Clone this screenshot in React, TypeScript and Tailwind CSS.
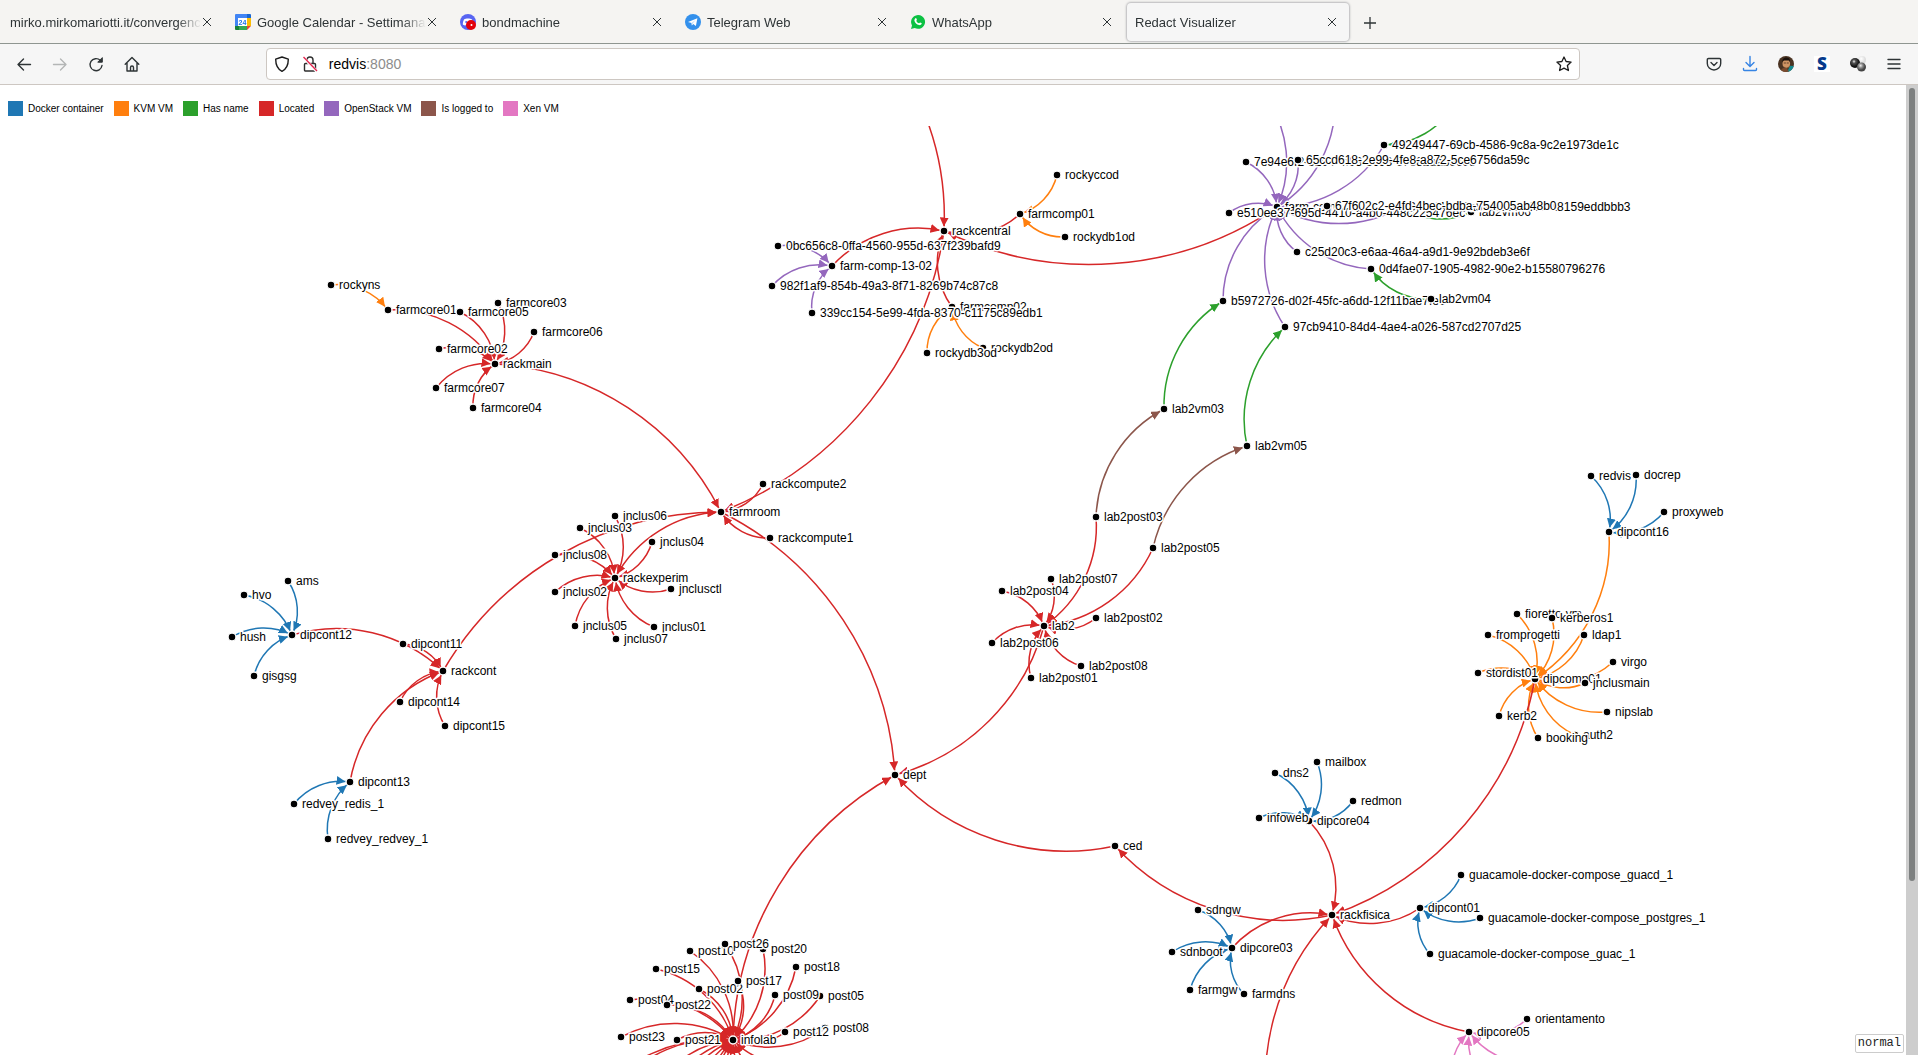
import React from "react";

type Kind = "docker" | "kvm" | "name" | "located" | "openstack" | "logged" | "xen";

const COLORS: Record<Kind, string> = {
  docker: "#1f77b4",
  kvm: "#ff7f0e",
  name: "#2ca02c",
  located: "#d62728",
  openstack: "#9467bd",
  logged: "#8c564b",
  xen: "#e377c2",
};

const LEGEND: { label: string; swatch: string }[] = [
  { label: "Docker container", swatch: "bg-[#1f77b4]" },
  { label: "KVM VM", swatch: "bg-[#ff7f0e]" },
  { label: "Has name", swatch: "bg-[#2ca02c]" },
  { label: "Located", swatch: "bg-[#d62728]" },
  { label: "OpenStack VM", swatch: "bg-[#9467bd]" },
  { label: "Is logged to", swatch: "bg-[#8c564b]" },
  { label: "Xen VM", swatch: "bg-[#e377c2]" },
];

type NodeRow = [label: string, x: number, y: number];

// Later rows are painted over earlier ones.
const NODES: NodeRow[] = [
  ["rackcentral", 944, 231],
  ["rockyccod", 1057, 175],
  ["farmcomp01", 1020, 214],
  ["rockydb1od", 1065, 237],
  ["farm-comp-13-02", 832, 266],
  ["0bc656c8-0ffa-4560-955d-637f239bafd9", 778, 246],
  ["982f1af9-854b-49a3-8f71-8269b74c87c8", 772, 286],
  ["farmcomp02", 952, 307],
  ["339cc154-5e99-4fda-8370-c1175c89edb1", 812, 313],
  ["rockydb2od", 983, 348],
  ["rockydb3od", 927, 353],
  ["lab2vm06", 1471, 212],
  ["farm-comp-13-01", 1277, 207],
  ["7e94e6f2-5204-4f93-8c98-e7682aab9c0e", 1246, 162],
  ["65ccd618-2e99-4fe8-a872-5ce6756da59c", 1298, 160],
  ["49249447-69cb-4586-9c8a-9c2e1973de1c", 1384, 145],
  ["3c81f4d2-7a5e-4c1b-9f6a-18159eddbbb3", 1401, 207],
  ["e510ee37-695d-4410-a4b0-448c225476ec", 1229, 213],
  ["67f602c2-e4fd-4bec-bdba-754005ab48b0", 1327, 206],
  ["c25d20c3-e6aa-46a4-a9d1-9e92bdeb3e6f", 1297, 252],
  ["0d4fae07-1905-4982-90e2-b15580796276", 1371, 269],
  ["b5972726-d02f-45fc-a6dd-12f11bae7fe0", 1223, 301],
  ["lab2vm04", 1431, 299],
  ["97cb9410-84d4-4ae4-a026-587cd2707d25", 1285, 327],
  ["lab2vm05", 1247, 446],
  ["lab2vm03", 1164, 409],
  ["rockyns", 331, 285],
  ["farmcore01", 388, 310],
  ["farmcore03", 498, 303],
  ["farmcore05", 460, 312],
  ["farmcore06", 534, 332],
  ["farmcore02", 439, 349],
  ["rackmain", 495, 364],
  ["farmcore07", 436, 388],
  ["farmcore04", 473, 408],
  ["rackcompute2", 763, 484],
  ["farmroom", 721, 512],
  ["rackcompute1", 770, 538],
  ["jnclus06", 615, 516],
  ["jnclus03", 580, 528],
  ["jnclus04", 652, 542],
  ["jnclus08", 555, 555],
  ["rackexperim", 615, 578],
  ["jnclusctl", 671, 589],
  ["jnclus02", 555, 592],
  ["jnclus05", 575, 626],
  ["jnclus01", 654, 627],
  ["jnclus07", 616, 639],
  ["ams", 288, 581],
  ["hvo", 244, 595],
  ["dipcont12", 292, 635],
  ["hush", 232, 637],
  ["gisgsg", 254, 676],
  ["dipcont11", 403, 644],
  ["rackcont", 443, 671],
  ["dipcont14", 400, 702],
  ["dipcont15", 445, 726],
  ["dipcont13", 350, 782],
  ["redvey_redis_1", 294, 804],
  ["redvey_redvey_1", 328, 839],
  ["dept", 895, 775],
  ["lab2post03", 1096, 517],
  ["lab2post05", 1153, 548],
  ["lab2post07", 1051, 579],
  ["lab2post04", 1002, 591],
  ["lab2", 1044, 626],
  ["lab2post02", 1096, 618],
  ["lab2post06", 992, 643],
  ["lab2post08", 1081, 666],
  ["lab2post01", 1031, 678],
  ["redvis", 1591, 476],
  ["docrep", 1636, 475],
  ["proxyweb", 1664, 512],
  ["dipcont16", 1609, 532],
  ["fioretto-vm", 1517, 614],
  ["kerberos1", 1552, 618],
  ["fromprogetti", 1488, 635],
  ["ldap1", 1584, 635],
  ["virgo", 1613, 662],
  ["dipcomp01", 1535, 679],
  ["stordist01", 1478, 673],
  ["jnclusmain", 1585, 683],
  ["nipslab", 1607, 712],
  ["kerb2", 1499, 716],
  ["auth2", 1575, 735],
  ["booking", 1538, 738],
  ["mailbox", 1317, 762],
  ["dns2", 1275, 773],
  ["redmon", 1353, 801],
  ["dipcore04", 1309, 821],
  ["infoweb", 1259, 818],
  ["ced", 1115, 846],
  ["rackfisica", 1332, 915],
  ["sdngw", 1198, 910],
  ["dipcore03", 1232, 948],
  ["sdnboot", 1172, 952],
  ["farmgw", 1190, 990],
  ["farmdns", 1244, 994],
  ["dipcont01", 1420, 908],
  ["guacamole-docker-compose_guacd_1", 1461, 875],
  ["guacamole-docker-compose_postgres_1", 1480, 918],
  ["guacamole-docker-compose_guac_1", 1430, 954],
  ["dipcore05", 1469, 1032],
  ["orientamento", 1527, 1019],
  ["post10", 690, 951],
  ["post20", 763, 949],
  ["post26", 725, 944],
  ["post15", 656, 969],
  ["post18", 796, 967],
  ["post02", 699, 989],
  ["post17", 738, 981],
  ["post05", 820, 996],
  ["post09", 775, 995],
  ["post04", 630, 1000],
  ["post22", 667, 1005],
  ["post23", 621, 1037],
  ["post21", 677, 1040],
  ["post08", 825, 1028],
  ["post12", 785, 1032],
  ["infolab", 733, 1040],
];

const fan = (target: string, kind: Kind, sources: string[]): [string, string, Kind][] =>
  sources.map((s) => [s, target, kind]);

const LINKS: [string, string, Kind][] = [
  ...fan("farmcomp01", "kvm", ["rockyccod", "rockydb1od"]),
  ...fan("farmcomp02", "kvm", ["rockydb2od", "rockydb3od"]),
  ...fan("farmcore01", "kvm", ["rockyns"]),
  ...fan("farm-comp-13-02", "openstack", [
    "0bc656c8-0ffa-4560-955d-637f239bafd9",
    "982f1af9-854b-49a3-8f71-8269b74c87c8",
    "339cc154-5e99-4fda-8370-c1175c89edb1",
  ]),
  ...fan("rackcentral", "located", ["farm-comp-13-02", "farmcomp01", "farmcomp02", "farm-comp-13-01"]),
  ...fan("farm-comp-13-01", "openstack", [
    "7e94e6f2-5204-4f93-8c98-e7682aab9c0e",
    "65ccd618-2e99-4fe8-a872-5ce6756da59c",
    "49249447-69cb-4586-9c8a-9c2e1973de1c",
    "3c81f4d2-7a5e-4c1b-9f6a-18159eddbbb3",
    "e510ee37-695d-4410-a4b0-448c225476ec",
    "67f602c2-e4fd-4bec-bdba-754005ab48b0",
    "c25d20c3-e6aa-46a4-a9d1-9e92bdeb3e6f",
    "0d4fae07-1905-4982-90e2-b15580796276",
    "b5972726-d02f-45fc-a6dd-12f11bae7fe0",
    "97cb9410-84d4-4ae4-a026-587cd2707d25",
  ]),
  ["lab2vm03", "b5972726-d02f-45fc-a6dd-12f11bae7fe0", "name"],
  ["lab2vm04", "0d4fae07-1905-4982-90e2-b15580796276", "name"],
  ["lab2vm05", "97cb9410-84d4-4ae4-a026-587cd2707d25", "name"],
  ["lab2vm06", "3c81f4d2-7a5e-4c1b-9f6a-18159eddbbb3", "name"],
  ["lab2post03", "lab2vm03", "logged"],
  ["lab2post05", "lab2vm05", "logged"],
  ...fan("rackmain", "located", [
    "farmcore01", "farmcore02", "farmcore03", "farmcore04", "farmcore05", "farmcore06", "farmcore07",
  ]),
  ...fan("farmroom", "located", [
    "rackmain", "rackcentral", "rackcompute1", "rackcompute2", "rackexperim", "rackcont",
  ]),
  ...fan("rackexperim", "located", [
    "jnclus01", "jnclus02", "jnclus03", "jnclus04", "jnclus05", "jnclus06", "jnclus07", "jnclus08", "jnclusctl",
  ]),
  ...fan("dipcont12", "docker", ["ams", "hvo", "hush", "gisgsg"]),
  ...fan("dipcont13", "docker", ["redvey_redis_1", "redvey_redvey_1"]),
  ...fan("rackcont", "located", ["dipcont11", "dipcont12", "dipcont13", "dipcont14", "dipcont15"]),
  ...fan("dept", "located", ["farmroom", "lab2", "ced", "infolab"]),
  ...fan("lab2", "located", [
    "lab2post01", "lab2post02", "lab2post03", "lab2post04", "lab2post05", "lab2post06", "lab2post07", "lab2post08",
  ]),
  ...fan("dipcont16", "docker", ["redvis", "docrep", "proxyweb"]),
  ...fan("dipcomp01", "kvm", [
    "dipcont16", "fioretto-vm", "kerberos1", "fromprogetti", "ldap1", "virgo", "stordist01",
    "jnclusmain", "nipslab", "kerb2", "auth2", "booking",
  ]),
  ...fan("dipcore04", "docker", ["mailbox", "dns2", "redmon", "infoweb"]),
  ...fan("dipcore03", "docker", ["sdngw", "sdnboot", "farmgw", "farmdns"]),
  ...fan("dipcont01", "docker", [
    "guacamole-docker-compose_guacd_1",
    "guacamole-docker-compose_postgres_1",
    "guacamole-docker-compose_guac_1",
  ]),
  ...fan("dipcore05", "xen", ["orientamento"]),
  ...fan("rackfisica", "located", ["dipcomp01", "dipcore04", "dipcore03", "dipcont01", "dipcore05"]),
  ["rackfisica", "ced", "located"],
  ...fan("infolab", "located", [
    "post10", "post20", "post26", "post15", "post18", "post02", "post17", "post05",
    "post09", "post04", "post22", "post23", "post21", "post08", "post12",
  ]),
];

// Links whose source lies outside the visible part of the canvas.
const OUTER_LINKS: [number, number, string, Kind][] = [
  [816, -18, "rackcentral", "located"],
  [1266, 98, "farm-comp-13-01", "openstack"],
  [1335, 101, "farm-comp-13-01", "openstack"],
  [1455, 103, "49249447-69cb-4586-9c8a-9c2e1973de1c", "name"],
  [1275, 1148, "rackfisica", "located"],
  [1453, 1085, "dipcore05", "xen"],
  [1495, 1093, "dipcore05", "xen"],
  [1539, 1063, "dipcore05", "xen"],
  [588, 1106, "infolab", "located"],
  [613, 1092, "infolab", "located"],
  [653, 1095, "infolab", "located"],
  [660, 1112, "infolab", "located"],
  [668, 1130, "infolab", "located"],
  [690, 1130, "infolab", "located"],
  [712, 1110, "infolab", "located"],
  [722, 1145, "infolab", "located"],
  [740, 1120, "infolab", "located"],
  [760, 1130, "infolab", "located"],
  [775, 1110, "infolab", "located"],
  [792, 1090, "infolab", "located"],
  [808, 1062, "infolab", "located"],
];

const POS = new Map(NODES.map(([label, x, y]) => [label, { x, y }]));

function Arc({ x, y, target, kind }: { x: number; y: number; target: string; kind: Kind }) {
  const t = POS.get(target)!;
  const r = Math.hypot(t.x - x, t.y - y);
  return (
    <path
      d={`M${x},${y}A${r},${r} 0 0,1 ${t.x},${t.y}`}
      stroke={COLORS[kind]}
      markerEnd={`url(#arrow-${kind})`}
    />
  );
}

function Graph() {
  return (
    <svg
      viewBox="0 126 1906 929"
      preserveAspectRatio="xMinYMin slice"
      className="block min-h-0 w-full flex-1 overflow-hidden text-[12px]"
      role="img"
      aria-label="Infrastructure graph"
    >
      <defs>
        {(Object.keys(COLORS) as Kind[]).map((k) => (
          <marker key={k} id={`arrow-${k}`} viewBox="0 -5 10 10" refX={15} refY={-0.5} markerWidth={6} markerHeight={6} orient="auto">
            <path fill={COLORS[k]} d="M0,-5L10,0L0,5" />
          </marker>
        ))}
      </defs>
      <g fill="none" strokeWidth={1.5}>
        {OUTER_LINKS.map(([x, y, target, kind]) => (
          <Arc key={`${x}-${y}`} x={x} y={y} target={target} kind={kind} />
        ))}
        {LINKS.map(([s, target, kind]) => (
          <Arc key={`${s}-${target}`} x={POS.get(s)!.x} y={POS.get(s)!.y} target={target} kind={kind} />
        ))}
      </g>
      <g strokeLinecap="round" strokeLinejoin="round">
        {NODES.map(([label, x, y]) => (
          <g key={label} transform={`translate(${x},${y})`}>
            <circle r={4} stroke="white" strokeWidth={1.5} />
            <text x={8} y={4} stroke="white" strokeWidth={3} className="[paint-order:stroke]">
              {label}
            </text>
          </g>
        ))}
      </g>
    </svg>
  );
}

const CalendarIcon = () => (
  <svg viewBox="0 0 16 16" className="size-4 shrink-0">
    <path d="M0 1a1 1 0 0 1 1-1h11v4H4v8H0z" fill="#4285f4" />
    <path d="M12 0h3a1 1 0 0 1 1 1v3h-4z" fill="#1967d2" />
    <path d="M12 4h4v8h-4z" fill="#fbbc04" />
    <path d="M4 12h8v4H4z" fill="#34a853" />
    <path d="M0 12h4v4H1a1 1 0 0 1-1-1z" fill="#188038" />
    <path d="M12 12h4l-4 4z" fill="#ea4335" />
    <path d="M3 4h9v8H3z" fill="white" />
    <text x="7.5" y="10.5" textAnchor="middle" className="text-[7px] font-bold" fill="#1a73e8">24</text>
  </svg>
);

const DiscordIcon = () => (
  <svg viewBox="0 0 16 16" className="size-4 shrink-0">
    <circle cx="8" cy="8" r="8" fill="#5865f2" />
    <path d="M4 5.500c2-1.300 6-1.300 8 0 .8 1.500 1.200 3 1.200 5-1 .8-2 1-2.700 1l-.6-1h-3.800l-.6 1c-.7 0-1.700-.2-2.700-1 0-2 .4-3.500 1.200-5z" fill="white" />
    <circle cx="6.200" cy="8" r="1" fill="#5865f2" />
    <circle cx="11" cy="11" r="5" fill="#e3000b" />
    <circle cx="11.500" cy="11" r="1" fill="white" />
  </svg>
);

const TelegramIcon = () => (
  <svg viewBox="0 0 16 16" className="size-4 shrink-0">
    <circle cx="8" cy="8" r="8" fill="#3390ec" />
    <path d="M3 7.900 12.400 4.200 10.900 12 8.200 10.100 6.900 11.500 6.500 9.100z" fill="white" />
    <path d="M6.500 9.100 10.600 6 7.600 9.500 6.900 11.500z" fill="#b9d9f8" />
  </svg>
);

const WhatsAppIcon = () => (
  <svg viewBox="0 0 16 16" className="size-4 shrink-0">
    <path d="M1 15 2 11.400A7 6.900 0 1 1 4.700 14z" fill="#0cc143" />
    <path d="M5.500 4.200c.5-.2.800 0 1 .5l.4 1c.1.400-.6.800-.6 1.200.5 1.100 1.400 1.900 2.600 2.400.4 0 .8-.9 1.200-.8l1.300.6c.4.200.4.600.2 1-.5 1-1.600 1.300-2.600 1C6.600 10.400 5 8.700 4.500 7c-.3-1.200.2-2.300 1-2.800z" fill="white" />
  </svg>
);

const TABS: { title: string; icon?: React.ReactNode; active?: boolean }[] = [
  { title: "mirko.mirkomariotti.it/convergence/" },
  { title: "Google Calendar - Settimana del 24", icon: <CalendarIcon /> },
  { title: "bondmachine", icon: <DiscordIcon /> },
  { title: "Telegram Web", icon: <TelegramIcon /> },
  { title: "WhatsApp", icon: <WhatsAppIcon /> },
  { title: "Redact Visualizer", active: true },
];

function Tab({ title, icon, active }: (typeof TABS)[number]) {
  return (
    <div
      className={`mr-[3px] flex h-[38px] w-[222px] min-w-0 items-center rounded pr-[11px] pl-2 ${
        active ? "bg-[#f6f6f6] shadow-[0_0_2px_1px_#b9b9bb]" : ""
      }`}
    >
      <button
        role="tab"
        aria-selected={!!active}
        className="flex h-full min-w-0 flex-1 items-center gap-[6px] overflow-hidden [mask-image:linear-gradient(to_left,transparent,black_24px)]"
      >
        {icon}
        <span className="whitespace-nowrap pt-px">{title}</span>
      </button>
      <button aria-label={`Close ${title}`} className="flex w-3 shrink-0 justify-center">
        <svg viewBox="0 0 8 8" className="size-2" fill="none" stroke="#2e3436">
          <path d="M0 0 8 8M8 0 0 8" />
        </svg>
      </button>
    </div>
  );
}

function ToolButton({ label, children }: { label: string; children: React.ReactNode }) {
  return (
    <button aria-label={label} className="flex size-9 shrink-0 items-center justify-center">
      <svg
        viewBox="0 0 16 16"
        className="size-4 overflow-visible"
        fill="none"
        stroke="#2e3436"
        strokeWidth={1.4}
        strokeLinecap="round"
        strokeLinejoin="round"
      >
        {children}
      </svg>
    </button>
  );
}

export default function App() {
  return (
    <div className="flex h-screen flex-col overflow-hidden bg-white font-['Liberation_Sans',Arial,sans-serif] text-black">
      <div role="tablist" className="flex h-11 shrink-0 border-b border-[#8f9691] bg-[#f5f4f2] pt-[3px] pl-[2px] text-[13px] text-[#2e3436]">
        {TABS.map((t) => (
          <Tab key={t.title} {...t} />
        ))}
        <button aria-label="New tab" className="flex h-[39px] w-9 items-center justify-center">
          <svg viewBox="0 0 12 12" className="size-3" fill="none" stroke="#2e3436" strokeWidth={1.3}>
            <path d="M6 0v12M0 6h12" />
          </svg>
        </button>
      </div>

      <div className="flex h-[41px] shrink-0 items-center border-b border-[#cdc7c2] bg-[#f6f6f6] px-[6px]">
        <ToolButton label="Back">
          <path d="M14.500 8.500H2M7.500 3 2 8.500l5.500 5.500" />
        </ToolButton>
        <ToolButton label="Forward">
          <path d="M1.500 8.500H14M8.500 3 14 8.500 8.500 14" stroke="#b4b6b6" />
        </ToolButton>
        <ToolButton label="Reload">
          <path d="M14 9.500a6 6 0 1 1-1.800-5.200" />
          <path d="M14.300 2v4.200h-4.200z" fill="#2e3436" strokeWidth={1} />
        </ToolButton>
        <ToolButton label="Home">
          <path d="M1.200 8.200 8 1.500l6.800 6.700M3 7v8h10V7M6.500 15v-3.500a1.500 1.500 0 0 1 3 0V15" />
        </ToolButton>
        <div className="flex-[117]" />
        <div className="flex h-8 flex-[1311] items-center rounded border border-[#cdc7c2] bg-white px-[7px]">
          <svg viewBox="0 0 16 16" className="size-4 shrink-0" fill="none" stroke="#1c1c1c" strokeWidth={1.4} strokeLinejoin="round">
            <path d="M8 1 14.300 3.200C14.300 8.500 12.500 13 8 15.300 3.500 13 1.700 8.500 1.700 3.200z" />
          </svg>
          <svg viewBox="0 0 16 16" className="ml-3 size-4 shrink-0" fill="none" stroke="#2e2e2e" strokeWidth={1.4}>
            <rect x="2.500" y="7.500" width="11" height="7.500" rx="1" />
            <path d="M5 7V4a3 3 0 0 1 6 0v3" />
            <path d="M1.500 1.500 15 15.500" stroke="white" strokeWidth={3} />
            <path d="M1.500 1 15 15" stroke="#e22850" />
          </svg>
          <div className="relative ml-[11px] flex h-full min-w-0 flex-1 items-center text-[14px]">
            <span aria-hidden="true">
              redvis<span className="text-[#8c8c8c]">:8080</span>
            </span>
            <input
              aria-label="Address"
              defaultValue="redvis:8080"
              className="absolute inset-0 bg-transparent text-transparent outline-none"
            />
          </div>
          <button aria-label="Bookmark this page">
            <svg viewBox="0 0 16 16" className="size-4" fill="none" stroke="#1c1c1c" strokeWidth={1.3} strokeLinejoin="round">
              <path d="m8 1 2.100 4.500 5 .6-3.700 3.400 1 5L8 12.100l-4.400 2.400 1-5L.9 6.100l5-.6z" />
            </svg>
          </button>
        </div>
        <div className="flex-[117]" />
        <ToolButton label="Save to Pocket">
          <path d="M2.500 2.500h11a1.200 1.200 0 0 1 1.200 1.200V7.500a6.700 6.500 0 0 1-13.400 0V3.700a1.200 1.200 0 0 1 1.200-1.200zM5 6.500l3 3 3-3" />
        </ToolButton>
        <ToolButton label="Downloads">
          <g stroke="#3584e4">
            <path d="M8 .5v9.500M4 6.500 8 10.500l4-4M1.500 12.500v1a1 1 0 0 0 1 1h11a1 1 0 0 0 1-1v-1" />
          </g>
        </ToolButton>
        <ToolButton label="Account">
          <g stroke="none">
            <circle cx="8" cy="8" r="8" fill="#4a3322" />
            <path d="M11 15.400a8 8 0 0 0 4.700-5.500L12 9.800 9 15.900z" fill="#168a90" />
            <path d="M3 14.200C4 12 6 11.500 8 11.700l3 3.600a8 8 0 0 1-8-1.100z" fill="#7a4a2e" />
            <ellipse cx="8.300" cy="7.800" rx="3.800" ry="4.600" fill="#d09565" />
            <path d="M4.400 6C4.300 2.500 6.500 1.500 8.500 1.600c2.400.1 3.800 1.400 3.500 4.400l-1-1.600-5.300.1z" fill="#1c120c" />
            <path d="M5.400 10.300c1.500 1.800 4.500 1.800 5.800 0-.4 3-5.300 3.200-5.800 0z" fill="#6b4329" />
            <path d="M6.200 7h1.300M9.100 7h1.300" stroke="#4a2d1b" strokeWidth={0.8} />
          </g>
        </ToolButton>
        <button aria-label="Extension" className="flex size-9 shrink-0 items-center justify-center">
          <span className="flex size-4 items-center justify-center bg-white font-['Open_Sans',sans-serif] text-[17px] leading-4 font-extrabold text-[#063a8c]">S</span>
        </button>
        <ToolButton label="Proxy">
          <defs>
            <radialGradient id="ballDark" cx="40%" cy="35%">
              <stop offset="0" stopColor="#eee" />
              <stop offset=".35" stopColor="#555" />
              <stop offset="1" stopColor="#111" />
            </radialGradient>
            <radialGradient id="ballGrey" cx="40%" cy="35%">
              <stop offset="0" stopColor="#eee" />
              <stop offset=".5" stopColor="#888" />
              <stop offset="1" stopColor="#444" />
            </radialGradient>
            <radialGradient id="ballLight" cx="40%" cy="35%">
              <stop offset="0" stopColor="#fff" />
              <stop offset="1" stopColor="#ddd" />
            </radialGradient>
          </defs>
          <g stroke="none">
            <circle cx="12" cy="4" r="4" fill="url(#ballLight)" />
            <circle cx="5" cy="7" r="5" fill="url(#ballDark)" />
            <circle cx="11.500" cy="11" r="4.500" fill="url(#ballGrey)" />
          </g>
        </ToolButton>
        <ToolButton label="Menu">
          <path d="M2 3.500h12M2 8h12M2 12.500h12" />
        </ToolButton>
      </div>

      <div className="flex min-h-0 flex-1">
        <main className="relative flex min-w-0 flex-1 flex-col">
          <ul className="flex h-[41px] shrink-0 items-center pt-[6px] pl-2 text-[10px]">
            {LEGEND.map((l) => (
              <li key={l.label} className="mr-[10px] flex items-center gap-[5px]">
                <span className={`size-[15px] ${l.swatch}`} />
                {l.label}
              </li>
            ))}
          </ul>
          <Graph />
          <div className="absolute right-[2px] bottom-[2px] rounded-xs border border-[#cccccc] bg-white px-[2px] font-['Liberation_Mono',monospace] text-[12px] leading-[17px] text-[#222]">
            normal
          </div>
        </main>
        <div className="w-3 shrink-0 bg-[#cdcdcd] px-[3px] pt-[3px]">
          <div className="h-[82%] rounded-full bg-[#7d8080]" />
        </div>
      </div>
    </div>
  );
}
